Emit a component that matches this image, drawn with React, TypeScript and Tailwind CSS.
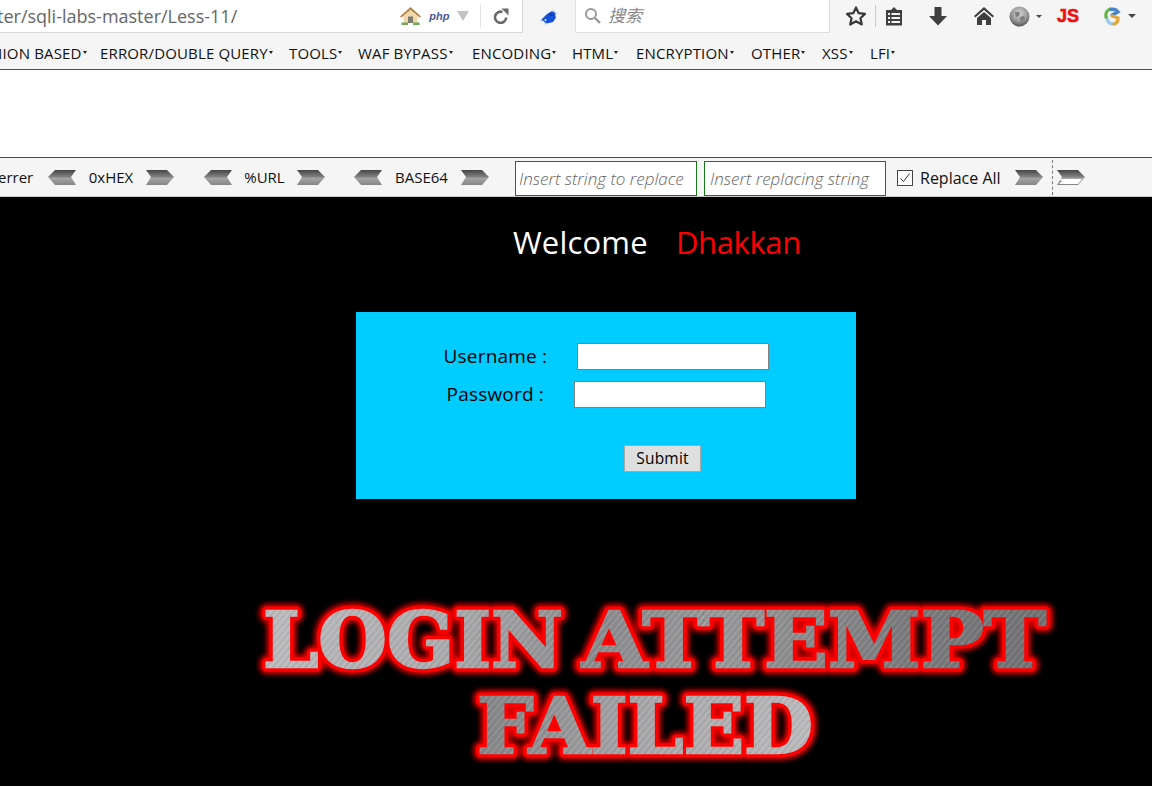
import React from "react";

const font = { fontFamily: '"Open Sans","Noto Sans","Noto Sans CJK SC",sans-serif' };

function Arrow({ dir, hollow = false }: { dir: "l" | "r"; hollow?: boolean }) {
  const id = `g-${dir}-${hollow ? 1 : 0}`;
  const pts = dir === "r" ? "0,1 21,1 28,8 21,16 0,16 5,8" : "28,1 7,1 0,8 7,16 28,16 23,8";
  return (
    <svg width="28" height="17" viewBox="0 0 28 17" className="shrink-0">
      <defs>
        <linearGradient id={id} x1="0" y1="0" x2="0" y2="1">
          <stop offset="0" stopColor="#454545" />
          <stop offset="0.45" stopColor="#808080" />
          <stop offset="0.55" stopColor="#a4a4a4" />
          <stop offset="1" stopColor="#858585" />
        </linearGradient>
      </defs>
      <polygon points={pts} fill={`url(#${id})`} />
      {hollow && <polygon points="2,10 21,10 25,10 21,15 2,15 5,12" fill="#fff" />}
    </svg>
  );
}

function Caret() {
  return <span className="ml-[1px] mb-[3px] inline-block h-0 w-0 border-x-[2.5px] border-t-[3px] border-x-transparent border-t-[#222]" />;
}

function MenuItem({ label, w }: { label: string; w: number }) {
  return (
    <span className="flex items-center shrink-0 whitespace-nowrap" style={{ width: w }}>
      {label}
      <Caret />
    </span>
  );
}

function Star() {
  return (
    <svg width="22" height="22" viewBox="0 0 22 22">
      <polygon points="11,2.5 13.7,8.2 20,8.9 15.4,13.2 16.8,19.5 11,16.3 5.2,19.5 6.6,13.2 2,8.9 8.3,8.2" fill="none" stroke="#3a3a3a" strokeWidth="2.2" strokeLinejoin="round" />
    </svg>
  );
}

function Clipboard() {
  return (
    <svg width="18" height="20" viewBox="0 0 18 20">
      <path d="M1 4h5l3-3 3 3h5v15.5H1z" fill="#3f3f3f" />
      <path d="M3 7h2v2H3zM6.5 7h8.5v2H6.5zM3 11h2v2H3zM6.5 11h8.5v2H6.5zM3 15h2v2H3zM6.5 15h8.5v2H6.5z" fill="#f5f5f5" />
    </svg>
  );
}

function Down() {
  return (
    <svg width="18" height="20" viewBox="0 0 18 20">
      <path d="M5.5 1h7v9H18l-9 9.5L0 10h5.5z" fill="#3f3f3f" />
    </svg>
  );
}

function HomeDark() {
  return (
    <svg width="20" height="18" viewBox="0 0 20 18">
      <path d="M10 0 20 9l-1.3 1.5L10 3 1.3 10.5 0 9z" fill="#3f3f3f" />
      <path d="M10 5l7 6v7h-5v-5H8v5H3v-7z" fill="#3f3f3f" />
    </svg>
  );
}

function HomeColor() {
  return (
    <svg width="21" height="20" viewBox="0 0 21 20">
      <path d="M10.5 1 21 10.5l-1.5 1L10.5 4 1.5 11.5 0 10.5z" fill="#b9823f" />
      <path d="M3.5 10.5l7-6.5 7 6.5V17h-14z" fill="#efd9ac" />
      <rect x="8" y="10.5" width="5" height="6.5" fill="#7d7a70" />
      <rect x="1.5" y="16.5" width="6.5" height="2.5" fill="#6fa85c" />
      <rect x="13" y="16.5" width="6.5" height="2.5" fill="#6fa85c" />
    </svg>
  );
}

function Reload() {
  return (
    <svg width="16" height="16" viewBox="0 0 16 16">
      <path d="M13.2 9.5A5.6 5.6 0 1 1 9.5 4" fill="none" stroke="#6a6a6a" strokeWidth="2.6" />
      <path d="M8.5 0.5h7V7.5z" fill="#6a6a6a" />
    </svg>
  );
}

function Bird() {
  return (
    <svg width="20" height="20" viewBox="0 0 20 20">
      <path d="M13 1l3 4 2 1-2 2zM1 13l3-1-1 3zM5 15l3 1-2 2z" fill="#a8c4e8" />
      <path d="M2.5 12.5 8 7l5-3 3 2 .8 5-2.8 4-6 1.5-3-2z" fill="#1450d8" />
      <circle cx="6.5" cy="13" r="1" fill="#e8f0ff" />
      <path d="M11 6l4 3-5 0z" fill="#0c38a8" />
    </svg>
  );
}

function Globe() {
  return (
    <svg width="21" height="21" viewBox="0 0 21 21">
      <defs>
        <radialGradient id="gl" cx="0.5" cy="0.35" r="0.65">
          <stop offset="0" stopColor="#d2d2d2" />
          <stop offset="0.6" stopColor="#9a9a9a" />
          <stop offset="1" stopColor="#555" />
        </radialGradient>
      </defs>
      <circle cx="10.5" cy="10.5" r="10" fill="url(#gl)" />
      <path d="M6 6h5l-1 4-3 1zM11 11l4-1 1 3-4 3z" fill="#7e7e7e" />
    </svg>
  );
}

function RingLogo() {
  return (
    <svg width="20" height="22" viewBox="0 0 20 22">
      <defs>
        <filter id="soft" x="-20%" y="-20%" width="140%" height="140%"><feGaussianBlur stdDeviation="0.7" /></filter>
      </defs>
      <g filter="url(#soft)" fill="none" strokeWidth="3.4" strokeLinecap="round">
        <path d="M4 13a6 6 0 0 0 6 6" stroke="#9cc8ec" />
        <path d="M3 12A7 7 0 0 1 7 4" stroke="#66b648" />
        <path d="M8 4.5A7 7 0 0 1 15 7L9 10" stroke="#4a86c8" />
        <path d="M9 11l6 2a6 6 0 0 1-4 6" stroke="#e0a83c" />
      </g>
    </svg>
  );
}

function DownTri({ c = "#444", w = 5, h = 4 }: { c?: string; w?: number; h?: number }) {
  return (
    <svg width={w * 2} height={h} viewBox={`0 0 ${w * 2} ${h}`} className="block">
      <polygon points={`0,0 ${w * 2},0 ${w},${h}`} fill={c} />
    </svg>
  );
}

const words = [
  { t: "LOGIN", x: 263, y: 666.5, w: 300, g: "silverA" },
  { t: "ATTEMPT", x: 582, y: 666.5, w: 464, g: "silverB" },
  { t: "FAILED", x: 477, y: 752.5, w: 336, g: "silverC" },
];

function FailedArt() {
  return (
    <svg width="1152" height="200" viewBox="0 586 1152 200" className="block">
      <defs>
        <linearGradient id="silverA" gradientUnits="userSpaceOnUse" x1="260" y1="610" x2="560" y2="670">
          <stop offset="0" stopColor="#bdbdbf" /><stop offset="0.6" stopColor="#adadaf" /><stop offset="1" stopColor="#929294" />
        </linearGradient>
        <linearGradient id="silverB" gradientUnits="userSpaceOnUse" x1="580" y1="610" x2="1040" y2="670">
          <stop offset="0" stopColor="#8a8a8c" /><stop offset="0.3" stopColor="#9a9a9c" /><stop offset="0.7" stopColor="#7c7c7e" /><stop offset="1" stopColor="#737375" />
        </linearGradient>
        <linearGradient id="silverC" gradientUnits="userSpaceOnUse" x1="480" y1="700" x2="810" y2="750">
          <stop offset="0" stopColor="#858587" /><stop offset="0.5" stopColor="#a8a8aa" /><stop offset="1" stopColor="#bcbcbe" />
        </linearGradient>
        <pattern id="brush" width="5" height="5" patternUnits="userSpaceOnUse" patternTransform="rotate(-50)">
          <rect width="5" height="1" fill="#ffffff" fillOpacity="0.09" />
          <rect y="2.5" width="5" height="1" fill="#000000" fillOpacity="0.08" />
        </pattern>
        <filter id="glow" x="-10%" y="-30%" width="120%" height="160%">
          <feGaussianBlur stdDeviation="2.4" />
        </filter>
      </defs>
      {words.map((l) => {
        const p = { x: l.x, y: l.y, textLength: l.w, lengthAdjust: "spacingAndGlyphs" as const };
        return (
          <g key={l.t} fontFamily='"DejaVu Serif",serif' fontWeight="700" fontSize={76}>
            <text {...p} fill="#f00" stroke="#e00000" strokeWidth="14" strokeLinejoin="round" filter="url(#glow)">{l.t}</text>
            <text {...p} fill="#f00" stroke="#f00" strokeWidth="9" strokeLinejoin="round">{l.t}</text>
            <text {...p} fill={`url(#${l.g})`} stroke={`url(#${l.g})`} strokeWidth="2.4">{l.t}</text>
            <text {...p} fill="url(#brush)" stroke="url(#brush)" strokeWidth="2.4">{l.t}</text>
          </g>
        );
      })}
    </svg>
  );
}

const menu: [string, number][] = [
  ["ERROR/DOUBLE QUERY", 175],
  ["TOOLS", 55],
  ["WAF BYPASS", 100],
  ["ENCODING", 86],
  ["HTML", 50],
  ["ENCRYPTION", 101],
  ["OTHER", 57],
  ["XSS", 34],
  ["LFI", 26],
];

export default function App() {
  return (
    <div className="h-[786px] w-[1152px] overflow-hidden bg-black flex flex-col" style={font}>
      {/* URL bar */}
      <div className="h-[34px] flex bg-[#f5f5f5] shrink-0">
        <div className="w-[523px] h-[33px] bg-white border-r border-b border-[#d8d8d8] flex items-center overflow-hidden shrink-0">
          <span className="ml-[-3px] text-[18px] text-[#666] whitespace-nowrap">ter/sqli-labs-master/Less-11/</span>
          <div className="ml-[163px] flex items-center shrink-0">
            <HomeColor />
            <span className="ml-[8px] text-[11px] font-bold italic text-[#4a5a9a]" style={{ fontFamily: '"Liberation Sans",sans-serif' }}>php</span>
            <span className="ml-[8px]"><DownTri c="#c4c4c4" w={6} h={10} /></span>
            <span className="ml-[11px] h-[24px] w-px bg-[#e2e2e2]" />
            <span className="ml-[12px]"><Reload /></span>
          </div>
        </div>
        <div className="w-[52px] flex items-center justify-center shrink-0"><Bird /></div>
        <div className="w-[255px] h-[33px] bg-white border-r border-b border-l border-[#e0e0e0] flex items-center shrink-0">
          <svg width="18" height="18" viewBox="0 0 18 18" className="ml-[8px]">
            <circle cx="7" cy="7" r="5" fill="none" stroke="#999" strokeWidth="2" />
            <path d="M11 11l5 5" stroke="#999" strokeWidth="2.4" />
          </svg>
          <span className="ml-[6px] text-[17px] italic text-[#888]">搜索</span>
        </div>
        <div className="flex items-center pl-[15px] h-[32px]">
          <Star />
          <span className="ml-[8px] h-[22px] w-px bg-[#ccc]" />
          <span className="ml-[9px]"><Clipboard /></span>
          <span className="ml-[26px]"><Down /></span>
          <span className="ml-[27px]"><HomeDark /></span>
          <span className="ml-[15px]"><Globe /></span>
          <span className="ml-[6px]"><DownTri w={3} h={3} /></span>
          <span className="ml-[15px] text-[18px] font-bold text-[#f01010] [-webkit-text-stroke:0.6px_#f01010]" style={{ fontFamily: '"Liberation Sans",sans-serif' }}>JS</span>
          <span className="ml-[24px]"><RingLogo /></span>
          <span className="ml-[5px]"><DownTri w={4} h={4} /></span>
        </div>
      </div>
      {/* Menu */}
      <div className="h-[36px] bg-[#f5f5f5] border-b border-[#1f6b1f] flex items-center gap-[14px] text-[15px] tracking-[0.15px] text-[#111] overflow-hidden shrink-0 pt-[4px]">
        <span className="ml-[-20px] flex items-center shrink-0"><MenuItem label="UNION BASED" w={106} /></span>
        {menu.map(([m, w]) => (
          <MenuItem key={m} label={m} w={w} />
        ))}
      </div>
      {/* Blank */}
      <div className="h-[87px] bg-white shrink-0" />
      {/* Toolbar */}
      <div className="h-[40px] bg-[#f5f5f5] border-t border-t-[#1f6b1f] border-b border-b-[#c8c8c8] flex items-center text-[15px] text-[#111] overflow-hidden shrink-0">
        <span className="ml-[-2px] w-[50px] shrink-0">errer</span>
        <Arrow dir="l" />
        <span className="w-[70px] text-center shrink-0">0xHEX</span>
        <Arrow dir="r" />
        <span className="ml-[30px]"><Arrow dir="l" /></span>
        <span className="w-[65px] text-center shrink-0">%URL</span>
        <Arrow dir="r" />
        <span className="ml-[29px]"><Arrow dir="l" /></span>
        <span className="w-[79px] text-center shrink-0">BASE64</span>
        <Arrow dir="r" />
        <div className="ml-[26px] mt-[3px] w-[182px] h-[35px] bg-white border border-[#1a7a1a] flex items-center pl-[3px] italic font-light text-[#666] whitespace-nowrap shrink-0 text-[17px]">Insert string to replace</div>
        <div className="ml-[7px] mt-[3px] w-[182px] h-[35px] bg-white border border-[#1a7a1a] flex items-center pl-[5px] italic font-light text-[#666] whitespace-nowrap shrink-0 text-[17px]">Insert replacing string</div>
        <span className="ml-[11px] mt-[2px] w-[16px] h-[16px] border border-[#444] bg-white flex items-center justify-center shrink-0">
          <svg width="12" height="12" viewBox="0 0 12 12"><path d="M1.5 6.5l3 3 6-8" fill="none" stroke="#333" strokeWidth="1" /></svg>
        </span>
        <span className="ml-[7px] mt-[1px] w-[95px] text-[16px] whitespace-nowrap shrink-0">Replace All</span>
        <Arrow dir="r" />
        <span className="ml-[9px] h-[35px] border-l border-dashed border-[#777] shrink-0" />
        <span className="ml-[4px]"><Arrow dir="r" hollow /></span>
      </div>
      {/* Body */}
      <div className="flex-1 bg-black">
        <div className="pt-[23px] pl-[513px] flex text-[31px] leading-[44px] whitespace-nowrap">
          <span className="w-[163px] text-white tracking-[0.2px]">Welcome</span>
          <span className="text-[#ff0000] tracking-[-0.4px]">Dhakkan</span>
        </div>
        <div className="mt-[48px] ml-[356px] w-[500px] h-[187px] bg-[#00ccff] pt-[31px] text-black text-[19px] tracking-[0.2px]">
          <div className="flex justify-center items-center h-[27px]">
            <span className="w-[103px] whitespace-nowrap">Username :</span>
            <input className="ml-[30px] w-[192px] h-[27px] bg-white border border-[#808080]" />
          </div>
          <div className="mt-[11px] flex justify-center items-center h-[27px]">
            <span className="w-[97px] whitespace-nowrap">Password :</span>
            <input className="ml-[30px] w-[192px] h-[27px] bg-white border border-[#808080]" />
          </div>
          <button className="block mt-[37px] ml-[268px] w-[77px] h-[27px] pt-[1px] bg-[#dfdfdf] border border-[#a8a8a8] text-[15.5px] text-black">Submit</button>
        </div>
        <div className="mt-[87px]"><FailedArt /></div>
      </div>
    </div>
  );
}
